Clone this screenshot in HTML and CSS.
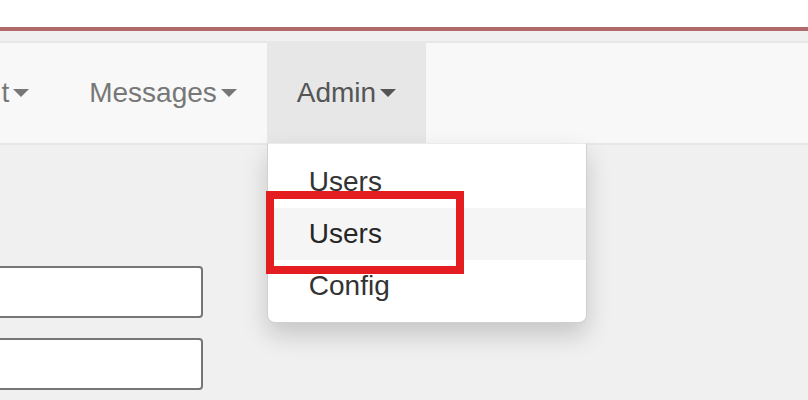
FILE: index.html
```html
<!DOCTYPE html>
<html>
<head>
<meta charset="utf-8">
<link rel="stylesheet" href="styles.css">
</head>
<body>
<header class="topbar"></header>
<nav class="navbar">
  <ul class="nav">
    <li class="nav-item"><a class="nav-link">Account<span class="caret"></span></a></li>
    <li class="nav-item"><a class="nav-link">Messages<span class="caret"></span></a></li>
    <li class="nav-item active">
      <a class="nav-link">Admin<span class="caret"></span></a>
      <ul class="dropdown-menu">
        <li><a class="dropdown-item">Users</a></li>
        <li><a class="dropdown-item hover">Users</a></li>
        <li><a class="dropdown-item">Config</a></li>
      </ul>
      <div class="highlight"></div>
    </li>
  </ul>
</nav>
<main class="content">
  <input class="field" type="text">
  <input class="field" type="text">
</main>
</body>
</html>
```
FILE: styles.css
```css
html, body {
  margin: 0;
  padding: 0;
  background: #f0f0f0;
  font-family: "Liberation Sans", Arial, sans-serif;
  overflow: hidden;
  height: 400px;
}

.topbar {
  height: 27px;
  background: #ffffff;
  border-bottom: 4px solid #b06a6a;
  margin-bottom: 10px;
}

.navbar {
  background: #f8f8f8;
  border-top: 2px solid #e7e7e7;
  border-bottom: 2px solid #e7e7e7;
  height: 100px;
}

.nav {
  list-style: none;
  margin: 0 0 0 -122px;
  padding: 0;
  display: flex;
}

.nav-item {
  position: relative;
}

.nav-link {
  display: block;
  padding: 0 30px;
  line-height: 100px;
  font-size: 28px;
  color: #777777;
  white-space: nowrap;
}

.nav-item.active .nav-link {
  background: #e7e7e7;
  color: #555555;
}

.caret {
  display: inline-block;
  width: 0;
  height: 0;
  margin-left: 4px;
  border-top: 8px solid currentColor;
  border-left: 8px solid transparent;
  border-right: 8px solid transparent;
  vertical-align: 5px;
}

.dropdown-menu {
  position: absolute;
  top: 100%;
  left: 0;
  width: 318px;
  margin: 0;
  padding: 12px 0 10px;
  list-style: none;
  background: #ffffff;
  border: 1px solid rgba(0, 0, 0, 0.18);
  border-top-color: rgba(0, 0, 0, 0.08);
  border-radius: 0 0 8px 8px;
  box-shadow: 0 12px 24px rgba(0, 0, 0, 0.175);
  z-index: 5;
}

.dropdown-item {
  display: block;
  padding: 6px 40px 6px 41px;
  line-height: 40px;
  font-size: 28px;
  color: #333333;
}

.dropdown-item.hover {
  background: #f5f5f5;
  color: #262626;
}

.highlight {
  position: absolute;
  left: -1px;
  top: 148px;
  width: 182px;
  height: 67px;
  border: 8px solid #e41e20;
  z-index: 6;
}

.content {
  display: flex;
  flex-direction: column;
  gap: 20px;
  padding-top: 121px;
  margin-left: -120px;
}

.field {
  width: 319px;
  height: 48px;
  box-sizing: content-box;
  margin: 0;
  padding: 0;
  border: 2px solid #767676;
  border-radius: 4px;
  background: #ffffff;
}
```
